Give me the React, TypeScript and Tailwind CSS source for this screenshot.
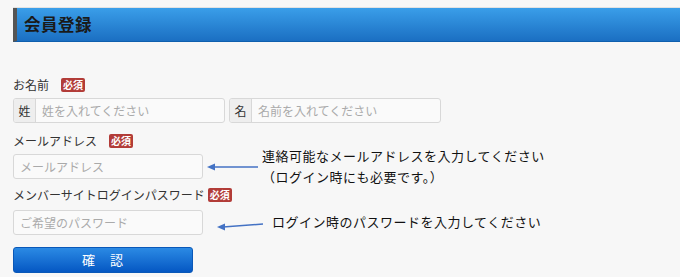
import React from 'react';

const Badge = ({ className = '' }: { className?: string }) => (
    <span className={`inline-flex items-center justify-center h-[14px] px-[2px] rounded-[2px] bg-[#b23c38] text-white text-[10px] font-bold leading-none ${className}`}>
        必須
    </span>
);

const Arrow = ({ width, y1, y2 }: { width: number, y1: number, y2: number }) => (
    <svg width={width} height="12" viewBox={`0 0 ${width} 12`} className="shrink-0 overflow-visible">
        <line x1={width - 1} y1={y1} x2="8" y2={y2} stroke="#4472c4" strokeWidth="1.5" />
        <polygon points={`2,${y2} 10,${y2 - 3.5} 10,${y2 + 3.5}`} fill="#4472c4" />
    </svg>
);

export default function App() {
    return (
        <div className="w-[680px] h-[277px] bg-[#f7f7f7] px-[13px] pt-[7px] overflow-hidden" style={{ fontFamily: '"Noto Sans CJK JP", "Noto Sans", sans-serif' }}>
            {/* Header */}
            <div className="border-t border-[#e2e2e2] -mr-[13px]">
                <div className="h-[34px] border-l-4 border-[#555] bg-gradient-to-b from-[#3a9ee9] to-[#1b6fc2] border-b border-b-[#0f5fae] flex items-center pl-[7px]">
                    <h1 className="text-[16.5px] font-bold text-[#1a1a1a] leading-none tracking-[0.5px]">会員登録</h1>
                </div>
            </div>

            {/* Name */}
            <div className="mt-[35px] flex items-center h-[16px] text-[12px] text-[#333]">
                <span>お名前</span>
                <Badge className="ml-[12px]" />
            </div>
            <div className="mt-[5px] flex gap-[4px] h-[25px]">
                <div className="flex w-[212px] border border-[#d8d8d8] rounded-[3px] overflow-hidden bg-[#fafafa]">
                    <span className="w-[22px] flex items-center justify-center bg-[#eeeeee] border-r border-[#d8d8d8] text-[12px] text-[#333]">姓</span>
                    <span className="flex items-center pl-[6px] text-[12px] text-[#aaa]">姓を入れてください</span>
                </div>
                <div className="flex w-[212px] border border-[#d8d8d8] rounded-[3px] overflow-hidden bg-[#fafafa]">
                    <span className="w-[22px] flex items-center justify-center bg-[#eeeeee] border-r border-[#d8d8d8] text-[12px] text-[#333]">名</span>
                    <span className="flex items-center pl-[6px] text-[12px] text-[#aaa]">名前を入れてください</span>
                </div>
            </div>

            {/* Email */}
            <div className="mt-[10px] flex items-center h-[16px] text-[12px] text-[#333]">
                <span>メールアドレス</span>
                <Badge className="ml-[12px]" />
            </div>
            <div className="mt-[5px] flex items-center h-[25px]">
                <div className="w-[190px] h-full flex items-center border border-[#d8d8d8] rounded-[3px] bg-[#fafafa] pl-[6px] text-[12px] text-[#aaa] shrink-0">
                    メールアドレス
                </div>
                <div className="ml-[2px] mt-[1px]">
                    <Arrow width={54} y1={6} y2={6} />
                </div>
                <div className="ml-[3px] -mt-[1px] text-[13px] leading-[21px] tracking-[0.5px] text-[#111] whitespace-nowrap">
                    <div>連絡可能なメールアドレスを入力してください</div>
                    <div>（ログイン時にも必要です。）</div>
                </div>
            </div>

            {/* Password */}
            <div className="mt-[8px] flex items-center h-[16px] text-[12px] text-[#333]">
                <span>メンバーサイトログインパスワード</span>
                <Badge className="ml-[3px]" />
            </div>
            <div className="mt-[7px] flex items-center h-[25px]">
                <div className="w-[190px] h-full flex items-center border border-[#d8d8d8] rounded-[3px] bg-[#fafafa] pl-[6px] text-[12px] text-[#aaa] shrink-0">
                    ご希望のパスワード
                </div>
                <div className="ml-[12px] mt-[9px]">
                    <Arrow width={49} y1={3} y2={6} />
                </div>
                <div className="ml-[8px] -mt-[2px] text-[13px] tracking-[0.5px] text-[#111] whitespace-nowrap">
                    ログイン時のパスワードを入力してください
                </div>
            </div>

            {/* Submit */}
            <button className="mt-[12px] w-[180px] h-[26px] rounded-[3px] border border-[#0a58b8] bg-gradient-to-b from-[#2b8ae4] to-[#0557c3] text-white text-[13px] tracking-[1px] flex items-center justify-center">
                確　認
            </button>
        </div>
    );
}
